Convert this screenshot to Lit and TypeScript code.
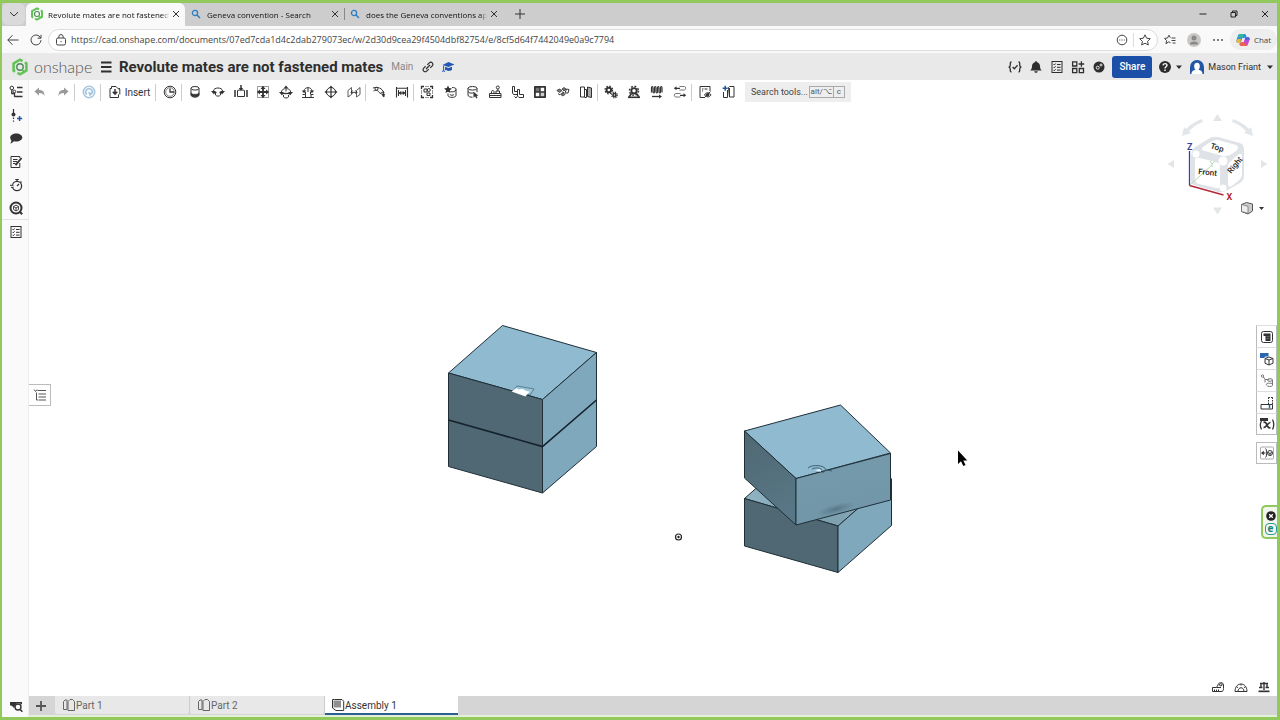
import { LitElement, html, svg, css } from "lit";
import { customElement, state } from "lit/decorators.js";

type Glyph = ReturnType<typeof svg>;

const icon = (g: Glyph) =>
  html`<svg class="ico" viewBox="0 0 14 14" aria-hidden="true">${g}</svg>`;

const G: Record<string, Glyph> = {
  chevron: svg`<path d="M3 5.200 7 9l4-3.800"/>`,
  close: svg`<path d="M4 4l6 6M10 4l-6 6"/>`,
  plus: svg`<path d="M7 2v10M2 7h10"/>`,
  plusBold: svg`<path d="M7 2v10M2 7h10" stroke-width="1.800"/>`,
  back: svg`<path d="M12.500 7H1.800M6.500 2.200 1.800 7l4.700 4.800"/>`,
  reload: svg`<path d="M11.600 5A5 5 0 1 0 12 7.200M12 1.800v3.400H8.600"/>`,
  lock: svg`<rect x="2.500" y="5" width="9" height="7" rx="1.500"/><path d="M4.800 5V3.800a2.200 2.200 0 0 1 4.400 0V5M7 8v1.200"/>`,
  search: svg`<circle cx="6" cy="6" r="2.600" stroke="#2d7fc4" stroke-width="1.300"/><path d="M8 8l3 3" stroke="#2d7fc4" stroke-width="1.500"/>`,
  logo: svg`<g stroke="#62c454" stroke-width="2"><path d="M3.200 10.600 2 9.800V4.200L7 1.300l2 1.100"/><path d="M10.800 3.400 12 4.200v5.600l-5 2.900-2-1.100"/></g><circle cx="7" cy="7" r="2.500" stroke="#4d8a55" stroke-width="1.100"/><path d="M8.300 9.200l2.500 1.500" stroke="#62c454" stroke-width="1.500"/>`,
  minimize: svg`<path d="M3.500 7h7"/>`,
  restore: svg`<path d="M4 5.500h4.500V10H4zM5.500 5.300V4H10v4.500H8.700"/>`,
  more: svg`<g fill="currentColor" stroke="none"><circle cx="3" cy="7" r=".9"/><circle cx="7" cy="7" r=".9"/><circle cx="11" cy="7" r=".9"/></g>`,
  moreRing: svg`<circle cx="7" cy="7" r="4.800"/><path d="M4.300 7h1M6.500 7h1M8.700 7h1" stroke-width="1.200"/>`,
  star: svg`<path d="M7 1.800l1.600 3.400 3.700.5-2.700 2.600.7 3.700L7 10.200 3.700 12l.7-3.700L1.700 5.700l3.700-.5z"/>`,
  favs: svg`<path d="M7.500 9.700 5.600 8.900 3 10.800l.6-3.200L1.500 5.400l3-.4L6 2.200l1.300 2.500M8.500 5h4M8.500 7.500h4M9.500 10h3"/>`,
  person: svg`<circle cx="7" cy="7" r="7" fill="#c9c7c6" stroke="none"/><circle cx="7" cy="5" r="2.500" fill="#8b8886" stroke="none"/><path d="M2.800 11.500C3 9 5 8.400 7 8.400s4 .6 4.200 3.100z" fill="#8b8886" stroke="none"/>`,
  copilot: svg`<g stroke="none"><path d="M4 1h4.500c1.500 0 1.600 1 2 2.500L8 5H6.300L4.600 10H2.500C.8 10 0 8.800.5 7L2 2.800C2.400 1.600 3 1 4 1z" fill="#1f8fe0"/><path d="M.7 6.400 4.800 5.600 4.600 10H2.500C.8 10 0 8.800.7 6.400z" fill="#f2b632"/><path d="M2.800 1.500C3.200 1 3.600 1 4 1h4.500L6.300 5l-4.600-1z" fill="#35b5a0"/><path d="M10 13H5.500c-1.500 0-1.700-1-2.100-2.300L6 9h1.700l1.700-5h2.100c1.700 0 2.500 1.200 2 3L12 11.200C11.600 12.400 11 13 10 13z" fill="#c74ad0"/><path d="M9.400 4h2.100c1.700 0 2.500 1.200 2 3L9 7.600z" fill="#5560e0"/><path d="M3.400 10.700 6 9h1.700l3.500 3.500c-.4.500-.8.500-1.200.5H5.500c-1.500 0-1.700-1-2.100-2.300z" fill="#f0604a"/></g>`,
  menu: svg`<path d="M2 2.500h10.500M2 7h10.500M2 11.500h10.500" stroke-width="2"/>`,
  link: svg`<path d="M5 9 9 5M6.300 4.800l2-2a2 2 0 0 1 3 3l-2 2M7.700 9.200l-2 2a2 2 0 0 1-3-3l2-2" stroke-width="1.200"/>`,
  cap: svg`<path d="M1.500 5 7.500 2 13.500 4.500 7.500 7z" fill="#2458b3" stroke="none"/><path d="M4 6.700v3c1.500 1.600 5.500 1.600 7 0v-3L7.500 8z" fill="#2458b3" stroke="none"/><path d="M2.600 5.500v5M1.500 12l1-2 1.100 2" stroke="#2458b3"/>`,
  check: svg`<path d="M3.500 2C2 2 2.300 3.500 2.300 5c0 1.200-.3 1.700-1.500 2 1.200.3 1.500.8 1.500 2 0 1.500-.3 3 1.200 3M10.500 2c1.500 0 1.200 1.500 1.200 3 0 1.200.3 1.700 1.500 2-1.200.3-1.500.8-1.500 2 0 1.500.3 3-1.200 3M4.600 7l1.800 1.800L9.600 5.300" stroke-width="1.300"/>`,
  bell: svg`<path d="M7 1.300c.8 0 1 .4 1 .9C10 2.700 10.900 4.200 11 6.200c.1 2.200.6 3 1.800 4.300H1.200C2.400 9.200 2.900 8.400 3 6.200c.1-2 1-3.500 3-4 0-.5.200-.9 1-.9zM5.300 11.200h3.400c0 2-3.400 2-3.400 0z" fill="currentColor" stroke="none"/>`,
  list: svg`<rect x="2" y="1.500" width="10" height="11"/><path d="M3.600 4.200l.7.800L5.600 3.500M3.600 7l.7.800L5.600 6.300M3.600 9.900l.7.800 1.300-1.500M7 4.500h3.600M7 7.300h3.600M7 10.100h3.600"/>`,
  apps: svg`<path d="M1.600 1.800h4.200V6H1.600zM1.600 8.500h4.200v4.200H1.600zM8.300 8.500h4.200v4.200H8.300zM10.400 1.200v5.600M7.600 4h5.600" stroke-width="1.300"/>`,
  globe: svg`<circle cx="7" cy="7" r="5.500" fill="currentColor" stroke="none"/><circle cx="5.700" cy="7.700" r="1.500" stroke="#e9e9e9"/><circle cx="9" cy="5" r="1" stroke="#e9e9e9"/><path d="M11 1l2 2" stroke="#e9e9e9" stroke-width="1.500"/>`,
  help: svg`<circle cx="7" cy="7" r="6" fill="currentColor" stroke="none"/><path d="M5 5.400C5.100 3 9 3 9 5.300 9 6.900 7 6.600 7 8.400M7 9.600v1.300" stroke="#fff" stroke-width="1.400"/>`,
  caret: svg`<path d="M4 5.500h6L7 9z" fill="currentColor" stroke="none"/>`,
  user: svg`<path d="M0 14V7a7 7 0 0 1 14 0v7z" fill="#2257a8" stroke="none"/><path d="M1.500 14c0-3 2-3.600 4-4.200C3.600 8 3.500 2.800 7 2.800s3.400 5.200 1.500 7c2 .6 4 1.200 4 4.200z" fill="#fff" stroke="none"/>`,
  tree: svg`<circle cx="2.800" cy="3" r="1.800"/><circle cx="5.500" cy="6.500" r="1.300"/><path d="M2.800 4.800v3.700h2.700M5.500 7.800v4M8 2.500h5.500M8 7h5.500M5.500 11.500h8" stroke-width="1.300"/>`,
  insertPt: svg`<path d="M4.500 0v4M4.500 8.500V10M4.500 11.500v1.200" stroke-width="1.200"/><circle cx="4.500" cy="5.500" r="2" fill="currentColor" stroke="none"/><path d="M8 9.500h5.200M10.600 6.900v5.200" stroke="#23549f" stroke-width="1.500"/>`,
  comment: svg`<path d="M7.300 1.500c3.400 0 6 1.700 6 4s-2.600 4-6 4c-.9 0-1.800-.1-2.600-.3-1 1.300-2 2.100-3.700 2.300.9-.9 1.300-1.900 1.400-3.100C1.600 7.700 1.200 6.700 1.200 5.500c0-2.300 2.700-4 6.100-4z" fill="currentColor" stroke="none"/>`,
  note: svg`<path d="M10.800 8v4.500H2v-11h8.800v1.500M4 4.500h4.500M4 6.500h4M4 8.500h2.500"/><path d="M6.500 10.200 12.600 3" stroke-width="1.900"/>`,
  watch: svg`<circle cx="8" cy="8" r="4.600" stroke-width="1.300"/><path d="M6.200 1.500h3.600M8 1.500v2M11.500 3.500l1 1M8 8l2-2" stroke-width="1.200"/><path d="M0 8h4.500" stroke="#fafafa" stroke-width="2.500"/><path d="M1 7.300h3.500M2 9.300h2.500"/>`,
  target: svg`<circle cx="7" cy="7" r="5.500" stroke-width="2"/><path d="M10.500 10.500l2.700 2.700" stroke-width="2"/><path d="M4.500 5.500 7 4l2.500 1.500v3L7 10 4.500 8.500zM4.500 5.500 7 7l2.500-1.500M7 7v3" stroke-width=".9"/>`,
  undo: svg`<path d="M6 2.500V5c3.500 0 5.500 1.500 5.500 6C10.300 8.600 8.500 8 6 8v2.500l-4.500-4z" fill="#999" stroke="none"/>`,
  redo: svg`<path d="M8 2.500V5c-3.500 0-5.500 1.500-5.500 6C3.700 8.600 5.500 8 8 8v2.500l4.500-4z" fill="#999" stroke="none"/>`,
  update: svg`<circle cx="7" cy="7" r="5.700" stroke="#a9c8df" stroke-width="1.600"/><path d="M4.800 9.500A3.300 3.300 0 1 1 10 8.500" stroke="#a9c8df" stroke-width="1.800"/><path d="M6 6.500l5 2-3.500 3z" fill="#a9c8df" stroke="none"/>`,
  insert: svg`<path d="M3.500 3.500H2v9h8.500V9.500M3.500 3.500V1.500H8l3 3M11.800 4v5.500M10.500 3.500h1.500"/><path d="M7 4v5M4.800 6.800 7 9.200l2.200-2.400" stroke-width="1.500"/>`,
  clock: svg`<circle cx="7" cy="7" r="5.800"/><circle cx="7" cy="7" r="4.300" stroke-width=".6"/><path d="M7 3.500V7h4" stroke-width="1.300"/>`,
  cyl: svg`<ellipse cx="7" cy="3.300" rx="4" ry="1.800"/><path d="M3 3.300v6.500c0 3 8 3 8 0V3.300"/><path d="M3 7.800c1 2 7 2 8 0v2c0 3-8 3-8 0z" fill="currentColor" stroke-width=".5"/>`,
  revolute: svg`<path d="M2.500 6c0-4 9-4 9 0M4.500 8v2c1 1.500 4 1.500 5 0V8"/><path d="M0 6h4.800L3 9.500zM14 6H9.200L11 9.500z" fill="currentColor" stroke="none"/><path d="M3 7.500h2.500M8.500 7.500H11" stroke-width="1.300"/>`,
  slider: svg`<path d="M3.500 5.500C4.500 4.800 9.500 4.800 10.500 5.500v6H3.500z"/><path d="M1 5v7M13 5v7" stroke-width="1.500"/><path d="M7 0v3" stroke-width="1.500"/><path d="M4.800 3h4.400L7 6z" fill="currentColor" stroke="none"/>`,
  planar: svg`<path d="M1.500 1.500h11v11h-11z" stroke-width=".5"/><path d="M7 2v10M2 7h10" stroke-width="1.800"/><path d="M4.500 4 7 .8 9.500 4zM4.500 10 7 13.200 9.500 10zM4 4.500.8 7 4 9.500zM10 4.500 13.200 7 10 9.500z" fill="currentColor" stroke="none"/>`,
  cylm: svg`<path d="M2.500 7C2.500 5 4 4 5.500 4M11.500 7C11.500 5 10 4 8.500 4M4.500 10v2c1 1.300 4 1.300 5 0v-2M7 3v3.500"/><path d="M4.500 3.500 7 .5l2.500 3zM0 7h4.800L3 10.500zM14 7H9.200L11 10.500z" fill="currentColor" stroke="none"/><path d="M3 8.500h8" stroke-width="1.300"/>`,
  pinslot: svg`<path d="M1.500 9.500h3v3H10v-3h2.500M4.500 9.500V7M9.500 9.500V7M3 6C3.500 1.500 10.500 1.500 11 6"/><path d="M.8 5.500h4.500L3 8.300zM13.200 5.500H8.700L11 8.300z" fill="currentColor" stroke="none"/><path d="M7 3v4M1 12.500h12"/>`,
  ball: svg`<circle cx="7" cy="7" r="4.500"/><path d="M7 2v10M2 7h10" stroke-width="1.200"/><path d="M5 3 7 .5 9 3zM5 11 7 13.500 9 11zM3 5 .5 7 3 9zM11 5l2.500 2L11 9z" fill="currentColor" stroke="none"/>`,
  parallel: svg`<path d="M1 5.500 4.500 2.500v7L1 12zM9.500 5.500 13 2.500v7L9.500 12z" stroke-width=".8"/><path d="M4 7.300h6M5.500 5.500 4 7.300l1.500 1.600M8.500 5.500 10 7.300 8.500 8.900"/>`,
  tangent: svg`<path d="M1 3c5-1.500 9 0 11 5M1.500 6c3-1.500 5-.5 6.500 2.500M8 8.500l4-2M11.500 7l.5 5"/><circle cx="4.500" cy="3.800" r="1.500"/><path d="M9 8.500l4 .5-1.500 3.500z" fill="currentColor" stroke="none"/>`,
  width: svg`<path d="M1.500 2v10.500M12.500 2v10.500M1.500 3.200h11M3.500 5v6M10.500 5v6" stroke-width="1.100"/><path d="M4 8h6" stroke-width="1.300"/><path d="M6.300 5.800 3.800 8l2.500 2.200zM7.700 5.800 10.200 8l-2.500 2.200z" fill="currentColor" stroke="none"/>`,
  group: svg`<path d="M1.500 4V1.500H4M10 1.500h2.500V4M12.500 10v2.500H10M4 12.500H1.500V10" stroke-width="1.300"/><path d="M1.500 5.500v3M12.500 5.500v3M5.500 1.500h3M5.500 12.500h3" stroke-dasharray="1 1"/><path d="M4 4h3v3H4zM7 8h3v2.500H7z"/><circle cx="8.800" cy="5" r="1.500"/>`,
  starcyl: svg`<path d="M5 .5l1.200 2.600 2.800.3-2.100 1.900.6 2.800L5 6.700 2.500 8.100l.6-2.800L1 3.400l2.800-.3z" fill="currentColor" stroke="none"/><path d="M9 2.500c2 0 4 .5 4 1.500v6.500c0 2.500-8 2.500-8 0V8.500M7.500 6.500c2 .8 5 .3 5.500-2M7 9.500c1 1 3 1 4 0"/>`,
  cylsel: svg`<ellipse cx="6.500" cy="3.300" rx="4.500" ry="1.800"/><path d="M2 3.300V10c0 1.500 2 2.200 4.500 2.200M11 3.300v4M2 6.500c1 2 5 2 6 1"/><path d="M7.500 6.700v6l1.700-1.400 1 2.200 1.300-.7-1-2h2z" fill="currentColor" stroke="none"/>`,
  stamp: svg`<path d="M1.500 8.500h11.500v4h-11.500zM3.500 8.500V6.500c0-1.200 2.500-1.200 2.500 0v2M8 8.500V6h3.500v2.500M9.800 6V4M1.500 10.500h11.500"/><circle cx="9.800" cy="2.500" r="1.500"/>`,
  stack: svg`<path d="M1.500 1.500h2v5h3v3h-4l-1-1.500zM6.500 4.500h2v5h4v3H8L6.500 11z" /><path d="M3.500 11.500 5 13l1-1.500" />`,
  table4: svg`<path d="M1.500 1.500h11v11h-11z" fill="currentColor"/><path d="M7.700 2.800h3.500v3.500H7.700zM2.800 7.700h3.500v3.500H2.800z" fill="#fff" stroke="none"/><path d="M2.800 2.800h3.500v3.500H2.800z" fill="#777" stroke="none"/><path d="M7.700 7.700h3.500v3.500H7.700z" fill="#ccc" stroke="none"/>`,
  pieces: svg`<path d="M.8 5.500l2.500-1.500L6 5.500 3.500 7.500zM4.500 9l3-1 1.500 1.500L6.500 11zM6 4l2-1.500L10 4 8 6z" fill="#777" stroke-width=".8"/><path d="M9 8l1.500-4L13 4.500l-1 3.500zM2 8.500l2 1.500M6 7l2 .5" />`,
  profiles: svg`<path d="M1.500 2h4v10h-4zM5.500 4.500h2v8h-2" /><path d="M8.500 2l4 1v9.500l-4-1z" fill="#aaa"/>`,
  gears: svg`<circle cx="4.800" cy="5" r="2.300" stroke-width="2"/><circle cx="4.800" cy="5" r="3.800" stroke-dasharray="1.500 1.500" stroke-width="1.300"/><circle cx="10.500" cy="10" r="1.500" stroke-width="1.700"/><circle cx="10.500" cy="10" r="2.800" stroke-dasharray="1.200 1" stroke-width="1.200"/>`,
  gearbox: svg`<circle cx="7" cy="5.800" r="2.700" stroke-width="1.900"/><circle cx="7" cy="5.800" r="4.500" stroke-dasharray="1.800 1.730" stroke-width="1.500"/><path d="M1 12.300h12" stroke-width="1.600"/><path d="M2 12l2.500-3.500M12 12 9.500 8.500" stroke-width="1.600"/>`,
  spring: svg`<path d="M1.500 7.500V3c0-2 1.500-2 1.500 0v3.500c0 2 1.500 2 1.500 0V3c0-2 1.500-2 1.500 0v3.500c0 2 1.500 2 1.500 0V3c0-2 1.500-2 1.500 0v3.500c0 2 1.500 2 1.500 0V3c0-2 1.500-2 1.500 0v4.500" stroke-width="1.200"/><path d="M2 11.500h8" stroke-width="1.300"/><path d="M9 9.500l3 2-3 2z" fill="currentColor" stroke="none"/>`,
  replace: svg`<path d="M6.500 1.500h4.800c1.800 0 1.800 3.500 0 3.500H6.500M7.500 8.500H2.700C.9 8.500.9 12 2.700 12h4.800" stroke="#777"/><path d="M7 3.300H3M11 10.300H7" stroke-width="1.300"/><path d="M3.500 1.300.8 3.300l2.700 2zM10.500 8.300l2.700 2-2.700 2z" fill="currentColor" stroke="none"/>`,
  viewlist: svg`<path d="M12 6V1.500H2v11h4" /><path d="M4 4h1.500M6.500 4h3M4 6h1"/><path d="M6.500 10c1.500-3 5-3 6.500 0-1.500 2.500-5 2.500-6.500 0z"/><circle cx="9.700" cy="9.800" r="1.300" fill="currentColor"/><path d="M6 13l6.500-6.500"/>`,
  addpart: svg`<path d="M4.200.8v5M1.700 3.300h5" stroke="#23549f" stroke-width="1.500"/><path d="M2.500 7v5.500h4V5M7.500 2.500l1-1h4.500v10.500H8.500zM8.500 3v9"/>`,
  part: svg`<path d="M1.500 3.500 3 2h2v9.500H1.500zM6 12.500V3.500L8 1.500h2.500l2 2v9z" />`,
  assembly: svg`<path d="M3.500 1.500H11l1.700 1.700V12.500H5L1.500 10V1.500h2" /><path d="M2.500 2.500h7.500v7H2.500z" fill="#8f8f8f" stroke="none"/>`,
  zoomCam: svg`<path d="M1 3h12v2.500C9 3 5.500 4.500 5.500 8.500H4C4 7 2.500 6.500 1 6.500z" fill="currentColor" stroke="none"/><circle cx="9" cy="8" r="3" stroke-width="1.400"/><path d="M11 10.200l2.300 2.500" stroke-width="1.600"/>`,
  outline: svg`<path d="M4.500 2.500H13M5.500 6H13M5.500 9H13M5.500 12H13M3.500 4.500V12h1.500" /><path d="M1 1.500l1.500 2L4 1.500" />`,
  bom: svg`<rect x="1.500" y="1.500" width="11" height="11" rx="2"/><path d="M3.500 3.500h7v7.500H5.500V6h-2z" fill="currentColor" stroke="none"/><path d="M6.500 6.500h3M6.500 8.500h3" stroke="#999" stroke-width=".5"/>`,
  cubeview: svg`<path d="M5 6.500 9 5l4 1.500v4.700L9 13l-4-1.800zM5 6.500 9 8l4-1.500M9 8v5"/><path d="M0 1h8.500v3.500H5.500L4 6H0z" fill="#2a66b0" stroke="none"/>`,
  route: svg`<g stroke="#777"><circle cx="2.500" cy="2" r="1.200"/><path d="M3.500 3 5 5.500h4M5 5.500v3"/><ellipse cx="10" cy="6" rx="2.500" ry="1.300"/><path d="M12.500 6v5.500c-1 1.500-5 1.500-6-.5s2-2 6-1.500"/></g>`,
  bbox: svg`<path d="M1 8.500h11.500v4.500H1z"/><path d="M8.500 8V1.500M12.500 8V1.500M8.500 1.500h4" stroke-dasharray="1.500 1"/><path d="M9.500 9v3.500" stroke="#2a66b0" stroke-width="1.500"/>`,
  vars: svg`<path d="M1.500 4C0 6.500 0 9.500 1.500 12.500M12.500 2.500c1.500 3 1.500 7 0 10" stroke-width="1.300"/><path d="M3.500 5.500c2-1 3 1 3.500 2.500s1.500 3.500 3.500 2.500M10.500 5.500c-2.500-.5-4 5.500-7 5" stroke-width="1.700"/><path d="M0 1h8v3H0z" fill="currentColor" stroke="none"/>`,
  explode: svg`<rect x=".5" y="1" width="13" height="12" rx="1" stroke="#aaa"/><path d="M2 7h3.500M5.500 2.500c2 2 0 3 1.500 4.500-1.500 1.500.5 2.500-1.500 4.500"/><path d="M3.800 4.800 1 7l2.800 2.200z" fill="currentColor" stroke="none"/><circle cx="10" cy="7" r="2.500"/><path d="M8 6.500l2 1 2-1M10 7.500v2"/>`,
  tape: svg`<path d="M1.500 7.500v4H10c2 0 2.500-1 2.500-3V4.500c0-2.500-5.500-2.500-5.500.5l-1.500 2.500zM3.500 9.500v2M5.500 9.500v2M7.500 9.500v2M5.500 7.500H10"/><ellipse cx="9.800" cy="4.800" rx="1.500" ry="1"/>`,
  protractor: svg`<path d="M1 11.500C1 1.500 13 1.500 13 11.500zM4 11.500c0-5 6-5 6 0M3 7l1 .7M7 4v1.500M11 7l-1 .7"/>`,
  balance: svg`<path d="M7 2v8M3 3.500h8M4 3.500v4M10 3.500v4M2 7.500h3.500M8.500 7.500H12" stroke-width="1.400"/><path d="M1.500 10.500h11v1.700h-11z" fill="currentColor" stroke="none"/>`,
  kill: svg`<circle cx="7" cy="7" r="4.800" fill="#222" stroke="none"/><path d="M5.200 5.200l3.600 3.600M8.800 5.200 5.200 8.800" stroke="#fff" stroke-width="1.300"/>`,
};

const GROUPS: string[][] = [
  ["cyl", "revolute", "slider", "planar", "cylm", "pinslot", "ball", "parallel"],
  ["tangent", "width"],
  ["group", "starcyl", "cylsel", "stamp", "stack", "table4", "pieces", "profiles"],
  ["gears", "gearbox", "spring", "replace"],
  ["viewlist", "addpart"],
];

const shared = css`
  :host { display: block; box-sizing: border-box; color: #333; font-family: Roboto, "Liberation Sans", sans-serif; font-size: 10px; }
  * { box-sizing: border-box; }
  button { border: 0; background: none; padding: 0; margin: 0; font: inherit; color: inherit; display: flex; align-items: center; justify-content: center; }
  input { border: 0; background: none; padding: 0; margin: 0; font: inherit; color: inherit; min-width: 0; outline: 0; }
  .ico { display: block; width: 14px; height: 14px; flex: none; fill: none; stroke: currentColor; stroke-width: 1; overflow: visible; }
`;

@customElement("browser-chrome")
class BrowserChrome extends LitElement {
  static styles = [shared, css`
    :host { font-family: "Open Sans", "Noto Sans", sans-serif; font-size: 8px; }
    .strip { display: flex; align-items: stretch; height: 23px; padding-bottom: 1px; background: #cdcdcd; }
    .drop { width: 23px; background: #dadada; border-radius: 6px; margin-right: 1px; }
    .tab { display: flex; align-items: center; width: 159px; padding: 0 2px 0 3px; border-left: 1px solid transparent; }
    .tab.on { background: #f9f9f9; border-radius: 6px 6px 0 0; margin-bottom: -1px; padding-bottom: 1px; }
    .tab.line { border-image: linear-gradient(transparent 25%, #888 25%, #888 75%, transparent 75%) 1; }
    .name { flex: 1; min-width: 0; display: flex; justify-content: flex-start; gap: 4px; white-space: nowrap; color: #111; }
    .name span { flex: 1; min-width: 0; text-align: left; mask-image: linear-gradient(to right, #000 94%, transparent); }
    .add { width: 34px; color: #333; }
    .win { margin-left: auto; display: flex; gap: 7px; }
    .win button { width: 24px; color: #222; }
    .bar { display: flex; align-items: center; height: 27px; background: #f9f9f9; color: #444; }
    .nav { width: 24px; }
    .nav.first { width: 22px; }
    .pill { flex: 1; display: flex; align-items: center; height: 22px; padding: 0 4px 0 5px; gap: 3px; border: 1px solid #ddd; border-radius: 11px; background: #fff; }
    .pill input { flex: 1; font: 9px "Open Sans", sans-serif; color: #444; }
    .pill button { width: 16px; }
    .pill .fav { border-left: 1px solid #ddd; width: 20px; padding-left: 2px; }
    .chat { width: 47px; height: 21px; gap: 4px; border-radius: 10px; background: #eee; }
  `];
  render() {
    const tab = (g: Glyph, text: string, cls: string) => html`
      <div class="tab ${cls}">
        <button class="name" role="tab">${icon(g)}<span>${text}</span></button>
        <button aria-label="Close tab">${icon(G.close)}</button>
      </div>`;
    return html`
      <div class="strip">
        <button class="drop" aria-label="Tab list">${icon(G.chevron)}</button>
        ${tab(G.logo, "Revolute mates are not fastened m", "on")}
        ${tab(G.search, "Geneva convention - Search", "")}
        ${tab(G.search, "does the Geneva conventions app", "line")}
        <button class="add" aria-label="New tab">${icon(G.plus)}</button>
        <div class="win">
          <button aria-label="Minimize">${icon(G.minimize)}</button>
          <button aria-label="Restore">${icon(G.restore)}</button>
          <button aria-label="Close">${icon(G.close)}</button>
        </div>
      </div>
      <div class="bar">
        <button class="nav first" aria-label="Back">${icon(G.back)}</button>
        <button class="nav" aria-label="Reload">${icon(G.reload)}</button>
        <div class="pill">
          ${icon(G.lock)}
          <input aria-label="Address" value="https://cad.onshape.com/documents/07ed7cda1d4c2dab279073ec/w/2d30d9cea29f4504dbf82754/e/8cf5d64f7442049e0a9c7794" />
          <button aria-label="Page actions">${icon(G.moreRing)}</button>
          <button class="fav" aria-label="Add to favorites">${icon(G.star)}</button>
        </div>
        <button class="nav" aria-label="Favorites">${icon(G.favs)}</button>
        <button class="nav" aria-label="Profile">${icon(G.person)}</button>
        <button class="nav" aria-label="Settings">${icon(G.more)}</button>
        <button class="chat">${icon(G.copilot)}Chat</button>
      </div>`;
  }
}

@customElement("doc-header")
class DocHeader extends LitElement {
  static styles = [shared, css`
    .head { display: flex; align-items: center; height: 27px; padding: 0 0 0 9px; background: #e9e9e9; color: #2e2e2e; }
    .logo .ico { width: 18px; height: 18px; }
    .logo { display: flex; align-items: center; gap: 5px; width: 86px; color: #555; text-decoration: none; font: 300 16px/20px Lato, sans-serif; }
    .menu { width: 18px; }
    h1 { margin: 0 8px 0 4px; font: 700 15px/20px Roboto, sans-serif; white-space: nowrap; }
    .main { color: #888; font-size: 10px; }
    .ic { width: 21px; }
    .right { margin-left: auto; display: flex; align-items: center; }
    .share { width: 40px; height: 22px; margin: 0 6px 0 3px; border-radius: 3px; background: #1b4fa8; color: #fff; font-size: 10px; font-weight: 500; }
    .links { display: flex; margin-left: 5px; }
    .links button { width: 20px; }
    .user { gap: 4px; font-size: 9px; margin-left: 4px; }
    .user .ico:last-child { margin-left: -2px; }
  `];
  render() {
    return html`
      <header class="head">
        <a class="logo" href="#">${icon(G.logo)}onshape</a>
        <button class="menu" aria-label="Menu">${icon(G.menu)}</button>
        <h1>Revolute mates are not fastened mates</h1>
        <span class="main">Main</span>
        <div class="links">
          <button aria-label="Copy link">${icon(G.link)}</button>
          <button aria-label="Education">${icon(G.cap)}</button>
        </div>
        <div class="right">
          ${["check", "bell", "list", "apps", "globe"].map((n) => html`<button class="ic" aria-label=${n}>${icon(G[n])}</button>`)}
          <button class="share">Share</button>
          <button aria-label="Help">${icon(G.help)}${icon(G.caret)}</button>
          <button class="user">${icon(G.user)}Mason Friant${icon(G.caret)}</button>
        </div>
      </header>`;
  }
}

@customElement("tool-bar")
class ToolBar extends LitElement {
  static styles = [shared, css`
    .bar { display: flex; align-items: center; height: 24px; background: #fff; color: #333; }
    .grp { display: grid; grid-auto-flow: column; grid-auto-columns: 1fr; align-items: center; border-right: 1px solid #ccc; height: 17px; margin-right: 2px; flex: none; }
    .grp:last-of-type { border-right-color: transparent; }
    .n8 { width: 182px; } .n4 { width: 92px; } .n2 { width: 46px; } .n1 { width: 24px; }
    .insert { width: 53px; font-size: 10px; }
    .insert button { gap: 3px; }
    .find { display: flex; align-items: center; height: 20px; width: 106px; margin-left: 3px; padding: 0 6px; background: #eee; color: #333; font-size: 9px; }
    .find input { flex: 1; }
    .find input::placeholder { color: #444; opacity: 1; }
    kbd { font: 8px/10px Roboto, sans-serif; border: 1px solid #aaa; padding: 0 1px; color: #555; }
    kbd + kbd { border-left: 0; padding: 0 3px; }
  `];
  render() {
    const grp = (names: string[]) => html`<div class="grp n${names.length}">
      ${names.map((n) => html`<button aria-label=${n}>${icon(G[n])}</button>`)}</div>`;
    return html`<div class="bar">
      ${grp(["undo", "redo"])}${grp(["update"])}
      <div class="grp insert"><button>${icon(G.insert)}Insert</button></div>
      ${grp(["clock"])}
      ${GROUPS.map(grp)}
      <label class="find"><input aria-label="Search tools" placeholder="Search tools..." /><kbd>alt/⌥</kbd><kbd>c</kbd></label>
    </div>`;
  }
}

@customElement("model-view")
class ModelView extends LitElement {
  static styles = [shared, css`
    :host { flex: 1; min-height: 0; position: relative; overflow: hidden; background: #fff; }
    .scene { display: block; width: 100%; height: 100%; }
    .edge { stroke: #1f2f38; stroke-width: 1; stroke-linejoin: round; }
    .seam { fill: none; stroke: #14222b; stroke-width: 1.6; }
    .top { fill: #8fbad0; } .front { fill: #4f6873; } .side { fill: #80a8bd; }
    .cube { position: absolute; top: 6px; right: 7px; width: 104px; height: 112px; font: 500 9px Roboto, sans-serif; }
    .outline { position: absolute; left: 0; top: 280px; width: 22px; height: 22px; border: 1px solid #bbb; border-left: 0; background: #fff; color: #555; }
    .panel { position: absolute; right: 0; top: 221px; width: 21px; }
    .panel button { width: 21px; height: 22px; border: 1px solid #bbb; border-top-color: #ddd; border-bottom: 0; background: #fff; }
    .panel button:nth-child(5) { border-bottom: 1px solid #bbb; margin-bottom: 7px; }
    .panel button:nth-child(6) { border: 1px solid #bbb; }
    .measure { position: absolute; right: 2px; bottom: 2px; display: flex; }
    .measure button { width: 23px; }
  `];
  render() {
    return html`
      <svg class="scene" viewBox="29 104 1248 592" role="img" aria-label="Assembly">
        <defs>
          <linearGradient id="sh" x1="0" y1="0" x2=".25" y2="1"><stop offset=".4" stop-color="#7399aa"/><stop offset="1" stop-color="#7096a8"/></linearGradient>
          <linearGradient id="lf" x1="0" y1="0" x2=".3" y2="1"><stop offset="0" stop-color="#4f6873"/><stop offset="1" stop-color="#587685"/></linearGradient>
          <linearGradient id="bt" x1="0" y1="0" x2="1" y2="0"><stop offset="0" stop-color="#90b4c4"/><stop offset=".6" stop-color="#7d9fae"/><stop offset="1" stop-color="#90b4c4"/></linearGradient>
          <radialGradient id="dk"><stop offset="0" stop-color="#3d5560" stop-opacity=".5"/><stop offset="1" stop-color="#4d6570" stop-opacity="0"/></radialGradient>
        </defs>
        <path class="edge top" d="M502.500 325.500 596.500 352.500 542.500 399.500 448.500 373z"/>
        <path class="edge front" d="M448.500 373 542.500 399.500V493L448.500 466.500z"/>
        <path class="edge side" d="M542.500 399.500 596.500 352.500V446.500L542.500 493z"/>
        <path class="seam" d="M448.500 420 542.500 446.500 596.500 400"/>
        <path d="M517 386l17 3-4 6-17-4z" fill="#9cc4d8" stroke="#40606f" stroke-width=".7"/>
        <path d="M511.500 391.500l5-3.500 2 1.500 4-.5 4 2 3 .5-4 5z" fill="#fff"/>
        <path class="edge" fill="url(#bt)" d="M744.500 498.500 757 487.500 838 490 891.500 479 838 526z"/>
        <path class="edge front" d="M744.500 498.500 838 526V572.500L744.500 546z"/>
        <path class="edge side" d="M838 526 891.500 479V525.500L838 572.500z"/>
        <path class="edge top" d="M744.500 431 840.500 405 890.500 453 796 478.500z"/>
        <path class="edge" fill="url(#lf)" d="M744.500 431 796 478.500V525L744.500 478z"/>
        <path class="edge" fill="url(#sh)" d="M796 478.500 890.500 453.500V500L796 525z"/>
        <ellipse cx="836" cy="509" rx="20" ry="5" fill="url(#dk)" transform="rotate(-15 836 509)"/>
        <path d="M808 468c4-4 17-3 18 2l-4 3M812 469c4-2 9-1 10 1" fill="none" stroke="#3f6070"/>
        <path d="M815 470l5-1 1 3z" fill="#e7f1f6"/><path d="M826 470l6 1" stroke="#3f6070"/>
        <circle cx="678.500" cy="537" r="3" fill="#fff" stroke="#222" stroke-width="1.200"/><circle cx="678.500" cy="537" r="1.200" fill="#222"/>
        <path d="M958 450.500V464l3-2.700 2.300 4.700 2.200-1-2.200-4.500h4z" fill="#000"/>
      </svg>
      <svg class="cube" viewBox="1166 110 104 112" role="img" aria-label="View cube">
        <g fill="#e2e6e8"><path d="M1213 121l4.500-7 4.500 7zM1213 207.500l4.500 7 4.500-7zM1174 160v8l-6.500-4zM1261 160v8l6.500-4z"/>
        <path d="M1182 136l2-9 2 2c5-5 10-8 16-10l1 3c-6 2-10 5-14 9l2 2zM1253 136l-2-9-2 2c-5-5-10-8-16-10l-1 3c6 2 10 5 14 9l-2 2z"/></g>
        <path d="M1195 147l15-9q4-2 8-1l22 6q4 2 4 6v27q0 4-4 7l-14 8q-4 2-8 1l-24-7q-3-1-3-5v-22q0-7 4-11z" fill="#dfe3e7"/>
        <g fill="#fff"><path d="M1203 147q10-8 15-7l18 5q4 2 0 6-7 6-13 5l-18-5q-5-1-2-4z"/><path d="M1195 160q0-3 4-2l17 4q4 1 4 5v18q0 4-4 3l-17-4q-4-1-4-5z"/><path d="M1228 165q1-3 5-6l6-5q3-1 3 2v19q-1 4-4 6l-6 5q-4 2-4-2z"/><circle cx="1196" cy="154" r="3.500"/><circle cx="1223" cy="161" r="4.500"/><circle cx="1223" cy="188" r="3.500"/></g>
        <path d="M1189.500 185.500V151" stroke="#3a3fa0" stroke-width="1.300"/><path d="M1189.500 185.500l34 9.500" stroke="#b3283a" stroke-width="1.300"/><path d="M1190 185l22-20" stroke="#b5dcb5"/><path d="M1210 161l2 3 3-3M1212 164v3" stroke="#b5dcb5" fill="none"/>
        <g fill="#222" font-size="8"><text x="1198" y="174" transform="rotate(6 1198 174)">Front</text><text x="1210" y="148" transform="rotate(18 1210 148)">Top</text><text x="1231" y="174" transform="rotate(-50 1231 174)">Right</text></g>
        <text x="1187" y="149.500" font-weight="700" fill="#3a3fa0">Z</text><text x="1226.500" y="200" font-weight="700" fill="#b3283a">X</text>
        <path d="M1241.500 204.500l5-2 6 1.500v7l-4.500 3-6.500-2.500z" fill="#ccc" stroke="#555"/><path d="M1241.500 204.500l6.500 1.800v7l-6.500-1.800z" fill="#eee" stroke="#666" stroke-width=".7"/>
        <path d="M1259 207h5l-2.500 3z" fill="#333"/>
      </svg>
      <button class="outline" aria-label="Instances">${icon(G.outline)}</button>
      <div class="panel">
        ${["bom", "cubeview", "route", "bbox", "vars", "explode"].map((n) => html`<button aria-label=${n}>${icon(G[n])}</button>`)}
      </div>
      <div class="measure">
        ${["tape", "protractor", "balance"].map((n) => html`<button aria-label=${n}>${icon(G[n])}</button>`)}
      </div>`;
  }
}

@customElement("app-root")
class AppRoot extends LitElement {
  @state() private active = 2;
  static styles = [shared, css`
    :host { position: relative; height: 100vh; border: solid #92c95c; border-width: 3px 3px 3px 2px; display: flex; flex-direction: column; background: #eef6e6; overflow: hidden; }
    .body { flex: 1; min-height: 0; display: flex; }
    .side { width: 27px; display: flex; flex-direction: column; align-items: center; background: #fafafa; border-right: 1px solid #eee; padding-bottom: 3px; }
    .side button { width: 26px; height: 23px; padding-left: 1px; }
    .side .first { height: 24px; }
    .side .cut { border-top: 1px solid #e2e2e2; height: 25px; }
    .side .last { margin-top: auto; height: 16px; }
    .work { flex: 1; min-width: 0; display: flex; flex-direction: column; }
    .tabs { display: flex; height: 21px; background: #d5d5d5; border-bottom: 2px solid #e4efd8; font-size: 10px; color: #666; }
    .tabs .add { width: 26px; padding-right: 3px; color: #555; }
    .doc { width: 135px; height: 18px; justify-content: flex-start; gap: 0; padding-left: 7px; background: #e8e8e8; border-right: 1px solid #ccc; border-radius: 0 0 3px 3px; }
    .doc.on { width: 133px; height: 19px; padding-top: 1px; padding-left: 6px; background: #fff; color: #333; border-right: 0; border-bottom: 2px solid #2c5f94; border-radius: 0; }
    .rec { position: absolute; right: -3px; top: 502px; width: 19px; height: 34px; display: flex; flex-direction: column; justify-content: center; align-items: center; border: 2px solid #92c95c; border-right: 0; padding-right: 2px; border-radius: 5px 0 0 5px; background: #f2f7ee; }
    .e { width: 12px; height: 12px; border: 1px solid #2b9a94; border-radius: 4px; color: #17827c; font: 700 10px/9px "Open Sans", sans-serif; text-align: center; }
  `];
  render() {
    return html`
      <browser-chrome></browser-chrome>
      <doc-header></doc-header>
      <div class="body">
        <nav class="side">
          <button class="first" aria-label="Tree">${icon(G.tree)}</button>
          ${["insertPt", "comment", "note", "watch", "target"].map((n) => html`<button aria-label=${n}>${icon(G[n])}</button>`)}
          <button class="cut" aria-label="Tasks">${icon(G.list)}</button>
          <button class="last" aria-label="Search tabs">${icon(G.zoomCam)}</button>
        </nav>
        <div class="work">
          <tool-bar></tool-bar>
          <model-view></model-view>
          <div class="tabs">
            <button class="add" aria-label="Add tab">${icon(G.plusBold)}</button>
            ${["Part 1", "Part 2", "Assembly 1"].map((t, i) => html`
              <button class="doc ${i === this.active ? "on" : ""}" @click=${() => (this.active = i)}>${icon(i < 2 ? G.part : G.assembly)}${t}</button>`)}
          </div>
        </div>
      </div>
      <div class="rec">${icon(G.kill)}<span class="e">e</span></div>`;
  }
}
